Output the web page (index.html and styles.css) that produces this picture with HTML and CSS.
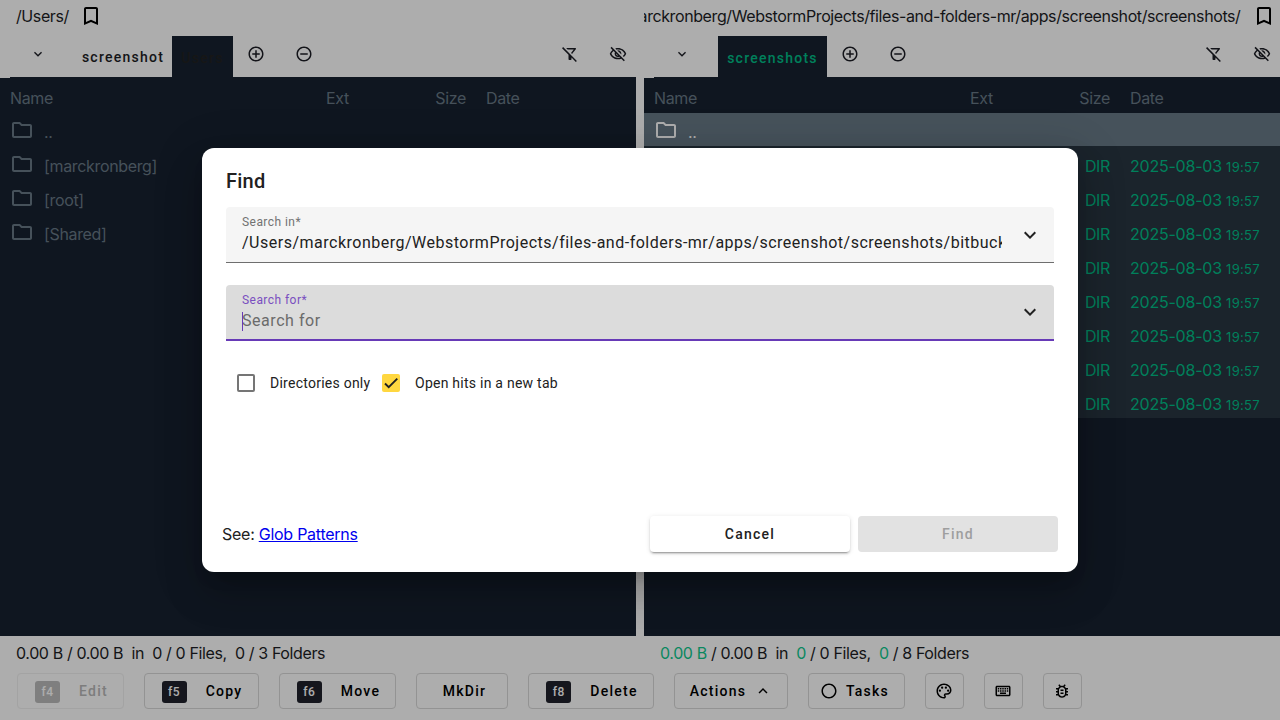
FILE: index.html
```html
<!DOCTYPE html>
<html lang="en">
<head>
<meta charset="utf-8">
<title>Files and Folders</title>
<link rel="stylesheet" href="styles.css">
</head>
<body>
<svg class="sprite" aria-hidden="true">
  <symbol id="bookmark" viewBox="0 0 24 24"><path d="M17 3H7c-1.1 0-2 .9-2 2v16l7-3 7 3V5c0-1.1-.9-2-2-2zm0 15l-5-2.18L7 18V5h10v13z"/></symbol>
  <symbol id="more" viewBox="0 0 24 24"><path d="M16.59 8.59L12 13.17 7.41 8.59 6 10l6 6 6-6z"/></symbol>
  <symbol id="less" viewBox="0 0 24 24"><path d="M12 8l-6 6 1.41 1.41L12 10.83l4.59 4.58L18 14z"/></symbol>
  <symbol id="add" viewBox="0 0 24 24"><path d="M13 7h-2v4H7v2h4v4h2v-4h4v-2h-4V7zm-1-5C6.48 2 2 6.48 2 12s4.48 10 10 10 10-4.48 10-10S17.52 2 12 2zm0 18c-4.41 0-8-3.59-8-8s3.59-8 8-8 8 3.59 8 8-3.59 8-8 8z"/></symbol>
  <symbol id="remove" viewBox="0 0 24 24"><path d="M7 11v2h10v-2H7zm5-9C6.48 2 2 6.48 2 12s4.48 10 10 10 10-4.48 10-10S17.52 2 12 2zm0 18c-4.41 0-8-3.59-8-8s3.59-8 8-8 8 3.59 8 8-3.59 8-8 8z"/></symbol>
  <symbol id="nofilter" viewBox="0 0 24 24"><path d="M16.95 6l-3.57 4.55 1.43 1.43c1.03-1.31 4.98-6.37 4.98-6.37C20.3 4.95 19.83 4 19 4H6.83l2 2h8.12zM2.81 2.81L1.39 4.22 10 13v6c0 .55.45 1 1 1h2c.55 0 1-.45 1-1v-2.17l5.78 5.78 1.41-1.41L2.81 2.81z"/></symbol>
  <symbol id="hidden" viewBox="0 0 24 24"><path d="M12 6c3.79 0 7.17 2.13 8.82 5.5-.59 1.22-1.42 2.27-2.41 3.12l1.41 1.41c1.39-1.23 2.49-2.77 3.18-4.53C21.27 7.11 17 4 12 4c-1.27 0-2.49.2-3.64.57l1.65 1.65C10.66 6.09 11.32 6 12 6zm-1.07 1.14L13 9.21c.57.25 1.03.71 1.28 1.28l2.07 2.07c.08-.34.14-.7.14-1.07C16.5 9.01 14.48 7 12 7c-.37 0-.72.05-1.07.14zM2.01 3.87l2.68 2.68C3.06 7.83 1.77 9.53 1 11.5 2.73 15.89 7 19 12 19c1.52 0 2.98-.29 4.32-.82l3.42 3.42 1.41-1.41L3.42 2.45 2.01 3.87zm7.5 7.5l2.61 2.61c-.04.01-.08.02-.12.02-1.38 0-2.5-1.12-2.5-2.5 0-.05.01-.08.01-.13zm-3.4-3.4l1.75 1.75c-.23.55-.36 1.15-.36 1.78 0 2.48 2.02 4.5 4.5 4.5.63 0 1.23-.13 1.77-.36l.98.98c-.88.24-1.8.38-2.75.38-3.79 0-7.17-2.13-8.82-5.5.7-1.43 1.72-2.61 2.93-3.53z"/></symbol>
  <symbol id="folder" viewBox="0 0 24 24"><path d="M9.17 6l2 2H20v10H4V6h5.17M10 4H4c-1.1 0-2 .9-2 2v12c0 1.1.9 2 2 2h16c1.1 0 2-.9 2-2V8c0-1.1-.9-2-2-2h-8l-2-2z"/></symbol>
  <symbol id="circle" viewBox="0 0 24 24"><path d="M12 2C6.48 2 2 6.48 2 12s4.48 10 10 10 10-4.48 10-10S17.52 2 12 2zm0 18c-4.41 0-8-3.59-8-8s3.59-8 8-8 8 3.59 8 8-3.59 8-8 8z"/></symbol>
  <symbol id="palette" viewBox="0 0 24 24"><path d="M12 22C6.49 22 2 17.51 2 12S6.49 2 12 2s10 4.04 10 9c0 3.31-2.69 6-6 6h-1.77c-.28 0-.5.22-.5.5 0 .12.05.23.13.33.41.47.64 1.06.64 1.67 0 1.38-1.12 2.5-2.5 2.5zm0-18c-4.41 0-8 3.59-8 8s3.59 8 8 8c.28 0 .5-.22.5-.5 0-.16-.08-.28-.14-.35-.41-.46-.63-1.05-.63-1.65 0-1.38 1.12-2.5 2.5-2.5H16c2.21 0 4-1.79 4-4 0-3.86-3.59-7-8-7z"/><circle cx="6.5" cy="11.5" r="1.5"/><circle cx="9.5" cy="7.5" r="1.5"/><circle cx="14.5" cy="7.5" r="1.5"/><circle cx="17.5" cy="11.5" r="1.5"/></symbol>
  <symbol id="keyboard" viewBox="0 0 24 24"><path d="M20 7v10H4V7h16m0-2H4c-1.1 0-2 .9-2 2v10c0 1.1.9 2 2 2h16c1.1 0 2-.9 2-2V7c0-1.1-.9-2-2-2zm-9 3h2v2h-2V8zm0 3h2v2h-2v-2zM8 8h2v2H8V8zm0 3h2v2H8v-2zm-3 0h2v2H5v-2zm0-3h2v2H5V8zm3 6h8v2H8v-2zm6-3h2v2h-2v-2zm0-3h2v2h-2V8zm3 3h2v2h-2v-2zm0-3h2v2h-2V8z"/></symbol>
  <symbol id="bug" viewBox="0 0 24 24"><path d="M20 8h-2.81c-.45-.78-1.07-1.45-1.82-1.96L17 4.41 15.59 3l-2.17 2.17C12.96 5.06 12.49 5 12 5s-.96.06-1.41.17L8.41 3 7 4.41l1.62 1.63C7.88 6.55 7.26 7.22 6.81 8H4v2h2.09c-.05.33-.09.66-.09 1v1H4v2h2v1c0 .34.04.67.09 1H4v2h2.81c1.04 1.79 2.97 3 5.19 3s4.15-1.21 5.19-3H20v-2h-2.09c.05-.33.09-.66.09-1v-1h2v-2h-2v-1c0-.34-.04-.67-.09-1H20V8zm-4 4v3c0 .22-.03.47-.07.7l-.1.65-.37.65c-.72 1.24-2.04 2-3.46 2s-2.74-.77-3.46-2l-.37-.64-.1-.65C8.03 15.48 8 15.23 8 15v-4c0-.23.03-.48.07-.7l.1-.65.37-.65c.3-.52.72-.97 1.21-1.31l.57-.39.74-.18c.31-.08.63-.12.94-.12.32 0 .63.04.95.12l.68.16.61.42c.5.34.91.78 1.21 1.31l.38.65.1.65c.04.22.07.47.07.69v1zm-6 2h4v2h-4v-2zm0-4h4v2h-4v-2z"/></symbol>
</svg>

<div class="app">
  <main class="panes">
    <section class="pane">
      <div class="path"><span class="path-text">/Users/</span><svg class="icon"><use href="#bookmark"/></svg></div>
      <div class="tabs">
        <span class="tool first"><svg class="icon small"><use href="#more"/></svg></span>
        <span class="tab plain">screenshot</span>
        <span class="tab active dim">Users</span>
        <span class="tool near"><svg class="icon small"><use href="#add"/></svg></span>
        <span class="tool near"><svg class="icon small"><use href="#remove"/></svg></span>
        <span class="spacer"></span>
        <span class="tool"><svg class="icon small"><use href="#nofilter"/></svg></span>
        <span class="tool last"><svg class="icon small"><use href="#hidden"/></svg></span>
      </div>
      <div class="table">
        <div class="row head"><span>Name</span><span>Ext</span><span class="num">Size</span><span class="date">Date</span></div>
        <div class="row"><span class="name"><svg class="icon"><use href="#folder"/></svg><span>..</span></span></div>
        <div class="row"><span class="name"><svg class="icon"><use href="#folder"/></svg><span>[marckronberg]</span></span></div>
        <div class="row"><span class="name"><svg class="icon"><use href="#folder"/></svg><span>[root]</span></span></div>
        <div class="row"><span class="name"><svg class="icon"><use href="#folder"/></svg><span>[Shared]</span></span></div>
      </div>
      <div class="status">0.00 B / 0.00 B&nbsp; in&nbsp; 0 / 0 Files,&nbsp; 0 / 3 Folders</div>
    </section>
    <section class="pane">
      <div class="path long"><span class="path-text">arckronberg/WebstormProjects/files-and-folders-mr/apps/screenshot/screenshots/</span><svg class="icon"><use href="#bookmark"/></svg></div>
      <div class="tabs">
        <span class="tool first"><svg class="icon small"><use href="#more"/></svg></span>
        <span class="tab active marked">screenshots</span>
        <span class="tool near"><svg class="icon small"><use href="#add"/></svg></span>
        <span class="tool near"><svg class="icon small"><use href="#remove"/></svg></span>
        <span class="spacer"></span>
        <span class="tool"><svg class="icon small"><use href="#nofilter"/></svg></span>
        <span class="tool last"><svg class="icon small"><use href="#hidden"/></svg></span>
      </div>
      <div class="table">
        <div class="row head"><span>Name</span><span>Ext</span><span class="num">Size</span><span class="date">Date</span></div>
        <div class="row current"><span class="name"><svg class="icon"><use href="#folder"/></svg><span>..</span></span></div>
        <div class="row picked"><span></span><span></span><span class="num">DIR</span><span class="date">2025-08-03 <small>19:57</small></span></div>
        <div class="row picked"><span></span><span></span><span class="num">DIR</span><span class="date">2025-08-03 <small>19:57</small></span></div>
        <div class="row picked"><span></span><span></span><span class="num">DIR</span><span class="date">2025-08-03 <small>19:57</small></span></div>
        <div class="row picked"><span></span><span></span><span class="num">DIR</span><span class="date">2025-08-03 <small>19:57</small></span></div>
        <div class="row picked"><span></span><span></span><span class="num">DIR</span><span class="date">2025-08-03 <small>19:57</small></span></div>
        <div class="row picked"><span></span><span></span><span class="num">DIR</span><span class="date">2025-08-03 <small>19:57</small></span></div>
        <div class="row picked"><span></span><span></span><span class="num">DIR</span><span class="date">2025-08-03 <small>19:57</small></span></div>
        <div class="row picked"><span></span><span></span><span class="num">DIR</span><span class="date">2025-08-03 <small>19:57</small></span></div>
      </div>
      <div class="status"><b>0.00 B</b> / 0.00 B&nbsp; in&nbsp; <b>0</b> / 0 Files,&nbsp; <b>0</b> / 8 Folders</div>
    </section>
  </main>
  <footer class="actions">
    <button class="btn edit" disabled><kbd>f4</kbd>Edit</button>
    <button class="btn copy"><kbd>f5</kbd>Copy</button>
    <button class="btn move"><kbd>f6</kbd>Move</button>
    <button class="btn mkdir">MkDir</button>
    <button class="btn delete"><kbd>f8</kbd>Delete</button>
    <button class="btn menu">Actions<svg class="icon small"><use href="#less"/></svg></button>
    <button class="btn tasks"><svg class="icon small"><use href="#circle"/></svg>Tasks</button>
    <button class="btn square"><svg class="icon small"><use href="#palette"/></svg></button>
    <button class="btn square"><svg class="icon small"><use href="#keyboard"/></svg></button>
    <button class="btn square"><svg class="icon small"><use href="#bug"/></svg></button>
  </footer>
</div>

<div class="backdrop">
  <div class="dialog" role="dialog">
    <h2 class="title">Find</h2>
    <div class="field">
      <div class="field-body"><span class="label">Search in*</span><span class="value">/Users/marckronberg/WebstormProjects/files-and-folders-mr/apps/screenshot/screenshots/bitbuck</span></div>
      <svg class="icon"><use href="#more"/></svg>
    </div>
    <div class="field focused">
      <div class="field-body"><span class="label">Search for*</span><span class="value hint"><i class="caret"></i>Search for</span></div>
      <svg class="icon"><use href="#more"/></svg>
    </div>
    <div class="checks">
      <span class="check"></span><span class="check-label">Directories only</span>
      <span class="check on"><svg viewBox="0 0 24 24"><path d="M1.73 12.91L8.1 19.28 22.79 4.59"/></svg></span><span class="check-label">Open hits in a new tab</span>
    </div>
    <div class="dialog-foot">
      <span class="see">See: <a href="#">Glob Patterns</a></span>
      <button class="dlg-btn cancel">Cancel</button>
      <button class="dlg-btn find" disabled>Find</button>
    </div>
  </div>
</div>
</body>
</html>
```
FILE: styles.css
```css
* { box-sizing: border-box; }
body {
  margin: 0;
  width: 1280px;
  height: 720px;
  overflow: hidden;
  background: #fff;
  font: 400 16px/20px Inter, sans-serif;
  letter-spacing: -0.34px;
  color: #1d1e26;
}
.sprite { display: none; }
.icon { width: 24px; height: 24px; fill: currentColor; flex: none; display: block; }
.icon.small { width: 18px; height: 18px; }

.app { height: 720px; display: flex; flex-direction: column; }
.panes { display: flex; gap: 8px; height: 673px; }
.pane { width: 636px; display: flex; flex-direction: column; }

.path { height: 36px; padding: 4px 0 8px 16px; display: flex; align-items: center; gap: 10px; letter-spacing: -0.4px; }
.path .icon { color: #000; }
.path.long { padding: 4px 4px 8px 0; gap: 11.5px; }
.path.long .path-text { flex: 1; min-width: 0; height: 24px; line-height: 24px; overflow: hidden; display: flex; justify-content: flex-end; white-space: nowrap; }

.tabs { height: 42px; display: flex; position: relative; }
.tabs::after { content: ""; position: absolute; left: 10px; right: 0; bottom: 0; height: 1px; background: #172130; }
.tool { width: 48px; height: 36px; display: flex; align-items: center; justify-content: center; color: #1d1e26; }
.tool.near .icon { margin-right: 2px; }
.tool.first { width: 74px; padding-left: 2px; }
.tool.last { width: 36px; margin-left: 6px; }
.tool.first .icon { width: 16px; height: 16px; }
.spacer { flex: 1; }
.tab { height: 41px; display: flex; align-items: center; justify-content: center; font: 500 14px/20px Roboto, sans-serif; letter-spacing: 1.25px; }
.tab.plain { width: 98px; }
.tab.active { background: #172130; padding-top: 2px; }
.tab.dim { width: 61px; color: #212121; }
.tab.marked { width: 109px; color: #00bd87; }

.table { flex: 1; background: #172130; color: #677885; }
.row { height: 34px; display: grid; grid-template-columns: 316px 82px 58px 150px; padding-left: 10px; padding-top: 6px; line-height: 28px; }
.row.head { height: 35px; line-height: 29px; }
.row.head + .row { height: 33px; padding-top: 5px; }
.num { text-align: right; }
.date { padding-left: 20px; white-space: nowrap; }
.picked .date { letter-spacing: -0.22px; }
.date small { font-size: 13px; letter-spacing: 0.3px; }
.name { display: flex; gap: 10px; }
.row.current { background: #677986; color: #fff; }
.row.picked { background: #293541; color: #00bd87; }

.status { height: 37px; padding: 0 16px; line-height: 35px; letter-spacing: -0.38px; }
.status b { font-weight: 400; color: #10c98e; }

.actions { display: flex; gap: 20px; padding-left: 17px; }
.btn { height: 36px; padding: 0; border: 1px solid #d9d9d9; border-radius: 4px; background: #fff; color: #000; display: flex; align-items: center; justify-content: center; font: 500 14px/20px Roboto, sans-serif; letter-spacing: 1.25px; }
.btn kbd { width: 25px; height: 22px; margin: 1px 19px 0 1px; border-radius: 3px; background: #1f212b; color: #fff; font: 500 12px/22px Roboto, sans-serif; letter-spacing: .5px; }
.edit { width: 107px; padding-left: 1px; color: #b8b8b8; border-color: #f0f0f0; }
.edit kbd { background: #bcbcbc; }
.copy { width: 115px; }
.move { width: 117px; padding-left: 1px; }
.mkdir { width: 92px; padding-left: 5px; }
.delete { width: 126px; padding-left: 1px; }
.menu { width: 114px; gap: 8px; }
.tasks { width: 97px; gap: 8px; padding-right: 4px; }
.square { width: 39px; padding-right: 1px; }

.backdrop { position: absolute; inset: 0; width: 1280px; height: 720px; background: rgba(0, 0, 0, .32); display: flex; align-items: center; justify-content: center; }
.dialog {
  width: 876px; height: 424px; padding: 0 24px; border-radius: 12px; background: #fff;
  box-shadow: 0 11px 15px -7px rgba(0,0,0,.2), 0 24px 38px 3px rgba(0,0,0,.14), 0 9px 46px 8px rgba(0,0,0,.12);
  font-family: Roboto, sans-serif; letter-spacing: .5px; color: #212121;
}
.title { margin: 0; height: 59px; padding-top: 17px; font: 500 20px/32px Roboto, sans-serif; letter-spacing: .25px; }
.field { height: 56px; margin-bottom: 22px; padding: 0 12px 0 16px; display: flex; align-items: center; background: #f5f5f5; border-bottom: 1px solid #6e6e6e; border-radius: 4px 4px 0 0; }
.field.focused { background: #dcdcdc; border-bottom: 2px solid #673ab7; }
.field-body { width: 760px; height: 100%; margin-right: auto; padding-top: 6px; overflow: hidden; }
.label { display: block; font-size: 12px; line-height: 18px; letter-spacing: .45px; color: #727272; }
.focused .label { color: #7a4fc0; }
.value { display: block; line-height: 24px; white-space: nowrap; }
.hint { position: relative; color: #6b6b6b; letter-spacing: .55px; }
.caret { position: absolute; left: 0; top: 3px; width: 1px; height: 19px; background: #673ab7; }
.checks { height: 40px; display: flex; align-items: center; padding-left: 11px; font-size: 14px; letter-spacing: .25px; }
.check { width: 18px; height: 18px; border: 2px solid #757575; border-radius: 2px; }
.check-label { margin: 0 11.6px 0 15px; }
.check.on { border: 0; background: #ffd740; }
.check svg { display: block; width: 14px; height: 14px; margin: 2px; fill: none; stroke: #212121; stroke-width: 3.2; }
.dialog-foot { margin: 113px -4px 0; display: flex; align-items: center; gap: 8px; }
.see { margin-right: auto; font-family: Inter, sans-serif; letter-spacing: -0.26px; }
.see a { color: #0000ee; }
.dlg-btn { width: 200px; height: 36px; border: 0; border-radius: 4px; font: 500 14px/20px Roboto, sans-serif; letter-spacing: 1.25px; }
.cancel { background: #fff; color: #212121; box-shadow: 0 3px 1px -2px rgba(0,0,0,.2), 0 2px 2px 0 rgba(0,0,0,.14), 0 1px 5px 0 rgba(0,0,0,.12); }
.find { background: #e2e2e2; color: #9e9e9e; }
```
